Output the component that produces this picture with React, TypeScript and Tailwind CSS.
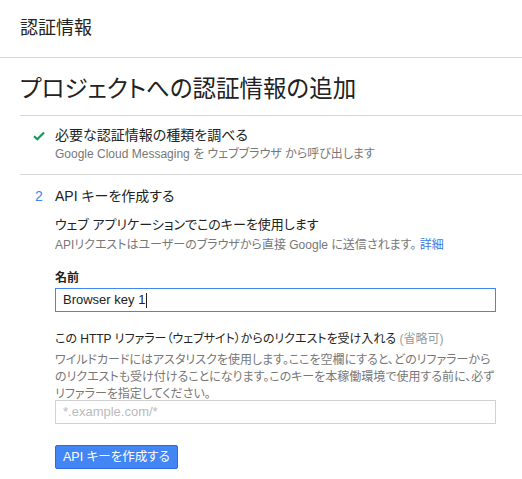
import React from "react";

const font = "font-['Liberation_Sans','Noto_Sans_CJK_JP',sans-serif] [font-feature-settings:'palt']";

export default function App() {
  return (
    <div className={`${font} w-[522px] h-[479px] bg-white text-[#222] overflow-hidden`}>
      <div className="h-[58px] border-b border-[#d6d6d6] pl-5 flex items-center">
        <span className="text-[18px] leading-none text-[#222] pb-[2px]">認証情報</span>
      </div>
      <div className="ml-5">
        <div className="h-[58px] border-b border-[#d6d6d6] flex items-center">
          <h1 className="text-[23.5px] leading-none text-[#222] pt-[6px]">プロジェクトへの認証情報の追加</h1>
        </div>
        <div className="border-b border-[#d6d6d6] pt-[10px] pb-[10px] flex">
          <div className="w-[35px] pl-[13px] pt-[5px]">
            <svg width="12" height="10" viewBox="0 0 12 10">
              <path d="M1 5.2 L4.3 8.3 L11 1.4" fill="none" stroke="#0f9d58" strokeWidth="2.2" />
            </svg>
          </div>
          <div>
            <div className="text-[14px] leading-[19px] text-[#222]">必要な認証情報の種類を調べる</div>
            <div className="text-[12px] leading-[19px] text-[#777]">Google Cloud Messaging を ウェブブラウザ から呼び出します</div>
          </div>
        </div>
        <div className="pt-[11px] flex">
          <div className="w-[35px] pl-[15px] text-[14px] leading-[20px] text-[#4285f4]">2</div>
          <div className="w-[441px]">
            <div className="text-[14px] leading-[20px] text-[#222]">API キーを作成する</div>
            <div className="mt-[9px] text-[13px] leading-[20px] text-[#222]">ウェブ アプリケーションでこのキーを使用します</div>
            <div className="text-[12px] leading-[20px] text-[#777]">
              APIリクエストはユーザーのブラウザから直接 Google に送信されます。 <span className="text-[#3b78e7]">詳細</span>
            </div>
            <div className="mt-[15px] text-[12px] leading-[16px] font-bold text-[#222]">名前</div>
            <div className="mt-[2px] h-[24px] border border-[#4285f4] flex items-center px-[7px] text-[13px] text-[#222]">
              Browser key 1<span className="inline-block w-px h-[15px] bg-[#222] ml-[1px]"></span>
            </div>
            <div className="mt-[18px] text-[12px] leading-[18px] text-[#222]">
              この HTTP リファラー（ウェブサイト）からのリクエストを受け入れる <span className="text-[#999]">(省略可)</span>
            </div>
            <div className="mt-[4px] text-[12px] leading-[17px] text-[#777]">
              ワイルドカードにはアスタリスクを使用します。ここを空欄にすると、どのリファラーからのリクエストも受け付けることになります。このキーを本稼働環境で使用する前に、必ずリファラーを指定してください。
            </div>
            <div className="mt-[-3px] h-[24px] border border-[#d0d0d0] flex items-center px-[7px] text-[13px] text-[#bbb]">
              *.example.com/*
            </div>
            <div className="mt-[20px]">
              <button className="h-[24px] px-[7px] bg-[#4285f4] border border-[#2f6bd6] rounded-[2px] text-white text-[12.5px] leading-none">
                API キーを作成する
              </button>
            </div>
          </div>
        </div>
      </div>
    </div>
  );
}
